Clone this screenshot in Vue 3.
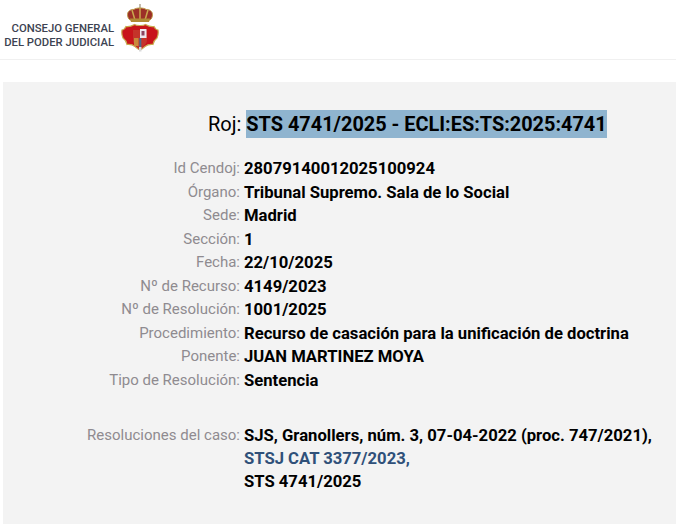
<template>
  <div class="page">
    <header class="top">
      <div class="brand">
        <div class="brand-text">
          <span>CONSEJO GENERAL</span>
          <span>DEL PODER JUDICIAL</span>
        </div>
        <svg class="crest" width="38" height="48" viewBox="0 0 38 48">
          <path d="M19 0v4" stroke="#9a8f78" stroke-width="1.2" />
          <path d="M6.500 10.500c0-3 3-5.500 6.500-5 1.500-2 10.500-2 12 0 3.500-.5 6.500 2 6.500 5 0 2.500-1 4.500-2.500 5.500h-20c-1.500-1-2.500-3-2.500-5.500z" fill="#9c2f27" stroke="#bd9a4a" stroke-width="1" />
          <path d="M11 6c1 3 2 7 3 10M27 6c-1 3-2 7-3 10M19 4v12" stroke="#c9a94e" stroke-width="1.500" fill="none" />
          <path d="M9 14.500h20l-1 3.500H10z" fill="#b08a35" />
          <path d="M1 26c1.500 0 3-1.500 4-3.500 3 .5 6-.5 8.500-2 1.500 1 3 1 5.500 1s4 0 5.500-1c2.500 1.500 5.500 2.500 8.500 2 1 2 2.500 3.500 4 3.500 .5 3 0 6-1 8-2 1.500-3.500 3.500-4 6.500-3.500-.5-6 .5-8 2-1.500 1-3 3-5 3.500-2-.5-3.500-2.500-5-3.500-2-1.500-4.500-2.500-8-2-.5-3-2-5-4-6.500-1-2-1.500-5-1-8z" fill="#c8141b" stroke="#c9a94e" stroke-width="1.200" />
          <path d="M12 26h14v10c0 4-3.500 6.500-7 8.500-3.500-2-7-4.500-7-8.500z" fill="#c4342a" />
          <rect x="19" y="25" width="6.500" height="9" fill="#eee7ee" />
          <path d="M20.500 27h3v4.500h-3z" fill="#8a4560" />
          <rect x="13" y="34" width="4.500" height="8" fill="#c98a3a" />
          <rect x="18.300" y="34" width="2" height="9" fill="#4a6a8a" />
          <rect x="18" y="43" width="2.500" height="4.500" fill="#d9d9d9" />
        </svg>
      </div>
    </header>

    <main class="panel">
      <h1 class="roj">Roj: <span class="sel">STS 4741/2025 - ECLI:ES:TS:2025:4741</span></h1>

      <dl class="meta">
        <div v-for="row in rows" :key="row.label" class="row">
          <dt>{{ row.label }}:</dt>
          <dd>{{ row.value }}</dd>
        </div>
      </dl>

      <dl class="meta cases">
        <div class="row">
          <dt>Resoluciones del caso:</dt>
          <dd>
            <div>SJS, Granollers, núm. 3, 07-04-2022 (proc. 747/2021),</div>
            <div class="link">STSJ CAT 3377/2023,</div>
            <div>STS 4741/2025</div>
          </dd>
        </div>
      </dl>
    </main>
  </div>
</template>

<script setup>
const rows = [
  { label: 'Id Cendoj', value: '28079140012025100924' },
  { label: 'Órgano', value: 'Tribunal Supremo. Sala de lo Social' },
  { label: 'Sede', value: 'Madrid' },
  { label: 'Sección', value: '1' },
  { label: 'Fecha', value: '22/10/2025' },
  { label: 'Nº de Recurso', value: '4149/2023' },
  { label: 'Nº de Resolución', value: '1001/2025' },
  { label: 'Procedimiento', value: 'Recurso de casación para la unificación de doctrina' },
  { label: 'Ponente', value: 'JUAN MARTINEZ MOYA' },
  { label: 'Tipo de Resolución', value: 'Sentencia' }
]
</script>

<style>
html, body {
  margin: 0;
  background: #fff;
  overflow: hidden;
}
</style>

<style scoped>
.page {
  width: 676px;
  height: 524px;
  overflow: hidden;
  font-family: Roboto, "Liberation Sans", sans-serif;
}

.top {
  height: 59px;
  border-bottom: 1px solid #f0f0f0;
  box-sizing: content-box;
}

.brand {
  display: flex;
  align-items: flex-start;
  padding-left: 3px;
}

.brand-text {
  display: flex;
  flex-direction: column;
  align-items: flex-end;
  width: 111px;
  margin-top: 22px;
  font-size: 11.3px;
  line-height: 14px;
  font-weight: 500;
  color: #3d4352;
  white-space: nowrap;
}

.crest {
  margin: 4px 0 0 7px;
}

.panel {
  margin: 22px 0 0 3px;
  height: 442px;
  background: #f3f3f3;
  padding-top: 27px;
  box-sizing: border-box;
}

.roj {
  margin: 0 0 0 205px;
  height: 28px;
  font-size: 20px;
  line-height: 30px;
  font-weight: 400;
  color: #000;
  white-space: nowrap;
}

.sel {
  display: inline-block;
  height: 28px;
  font-size: 19.9px;
  font-weight: 700;
  background: #8fb4cf;
}

.meta {
  margin: 20px 0 0;
}

.row {
  display: flex;
  min-height: 23.5px;
  line-height: 23.5px;
}

dt {
  width: 237px;
  text-align: right;
  font-size: 15px;
  color: #8f8b90;
  white-space: nowrap;
}

dd {
  margin: 0 0 0 4px;
  font-size: 16.65px;
  font-weight: 700;
  color: #000;
  white-space: nowrap;
}

.cases {
  margin-top: 32px;
}

.cases dd {
  line-height: 23px;
}

.link {
  color: #2f5079;
}
</style>
